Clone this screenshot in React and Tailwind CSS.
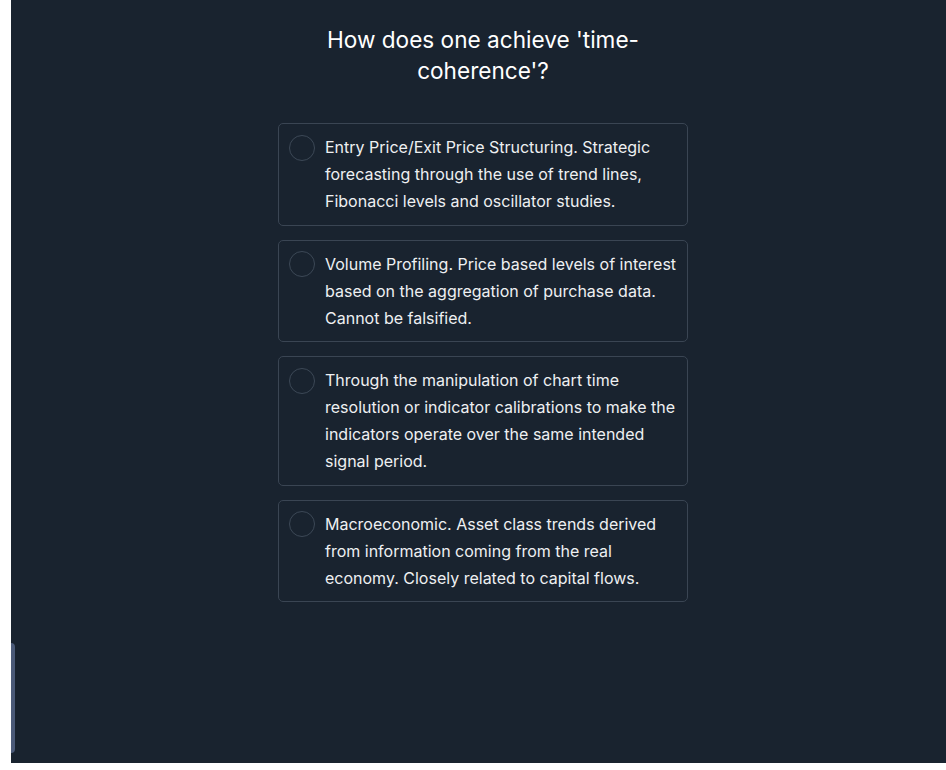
import React from "react";

const options = [
  "Entry Price/Exit Price Structuring. Strategic forecasting through the use of trend lines, Fibonacci levels and oscillator studies.",
  "Volume Profiling. Price based levels of interest based on the aggregation of purchase data. Cannot be falsified.",
  "Through the manipulation of chart time resolution or indicator calibrations to make the indicators operate over the same intended signal period.",
  "Macroeconomic. Asset class trends derived from information coming from the real economy. Closely related to capital flows.",
];

const App = () => {
  return (
    <div className="flex h-[770px] w-[946px] bg-white" style={{ fontFamily: "Inter, 'Noto Sans', sans-serif" }}>
      <div className="relative ml-[11px] h-[763px] flex-1 overflow-hidden bg-[#19232f]">
        <div className="absolute left-0 top-[643px] h-[110px] w-[4px] rounded-r-sm bg-[#4b5a78]" />
        <div className="ml-[267px] flex w-[410px] flex-col pt-[24px]">
          <h1 className="text-center text-[22.6px] leading-[31px] font-normal text-white">
            How does one achieve 'time-coherence'?
          </h1>
          <div className="mt-[37px] flex flex-col gap-[14px]">
            {options.map((text) => (
              <button
                key={text}
                className="flex w-full items-start gap-[10px] rounded-[5px] border border-[#3a4553] bg-[#19232f] px-[10px] pt-[10px] pb-[9.5px] text-left"
              >
                <span className="mt-[0.5px] h-[26px] w-[26px] shrink-0 rounded-full border border-[#3c4856]" />
                <span className="text-[16px] leading-[27px] text-[#eef0f2]">{text}</span>
              </button>
            ))}
          </div>
        </div>
      </div>
    </div>
  );
};

export default App;
